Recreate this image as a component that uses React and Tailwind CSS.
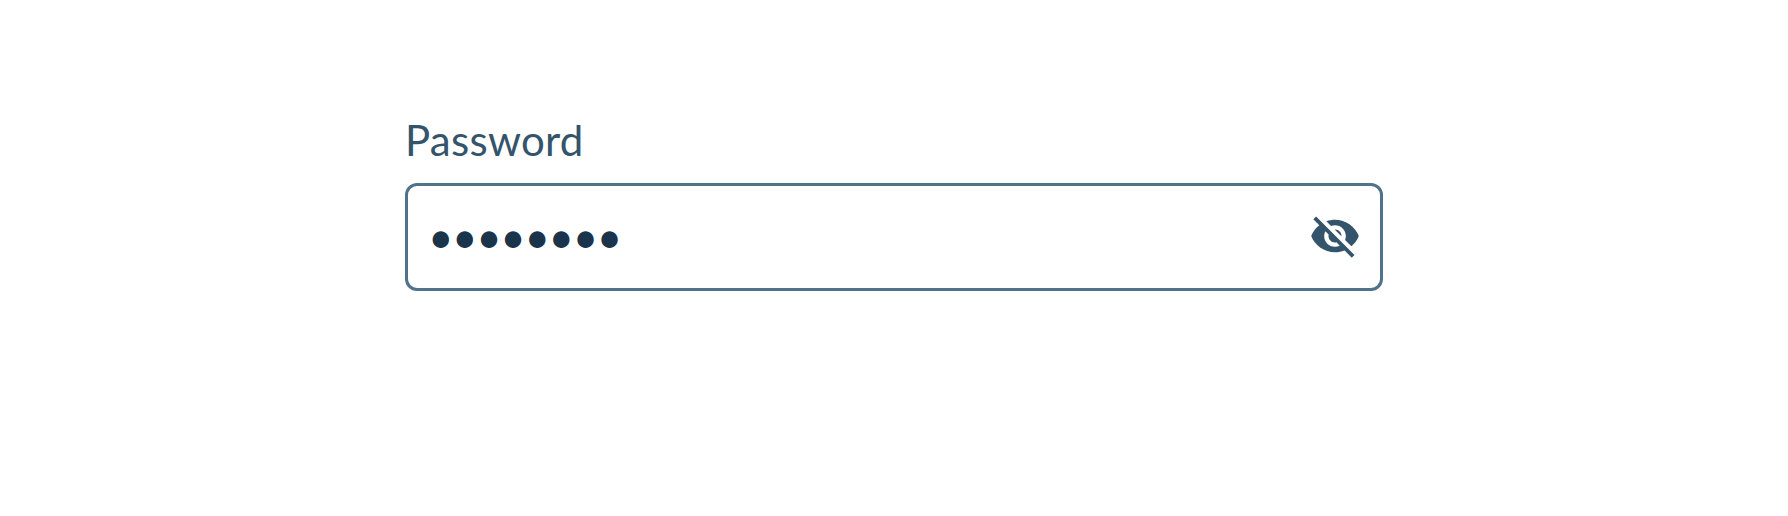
import { useState } from "react";
import { MdVisibility, MdVisibilityOff } from "react-icons/md";

export default function App() {
  const [visible, setVisible] = useState(false);
  const Icon = visible ? MdVisibility : MdVisibilityOff;
  return (
    <main className="flex h-[516px] justify-center bg-white pt-[115px] font-['Lato',sans-serif]">
      <div className="flex w-[978px] flex-col">
        <label htmlFor="password" className="h-[68px] text-[42px] leading-[50px] tracking-[0.3px] text-[#33546b]">
          Password
        </label>
        <div className="flex h-[108px] items-center rounded-xl border-[3px] border-[#50728b] pr-[19px] pb-[2px] pl-5">
          <input
            id="password"
            type={visible ? "text" : "password"}
            defaultValue="password"
            className="h-full min-w-0 flex-1 bg-transparent text-[44px] tracking-[-1.4px] text-[#19344b] outline-none"
          />
          <button
            type="button"
            aria-label="Toggle password visibility"
            onClick={() => setVisible(!visible)}
            className="text-[#33546b]"
          >
            <Icon className="size-[52px]" />
          </button>
        </div>
      </div>
    </main>
  );
}
